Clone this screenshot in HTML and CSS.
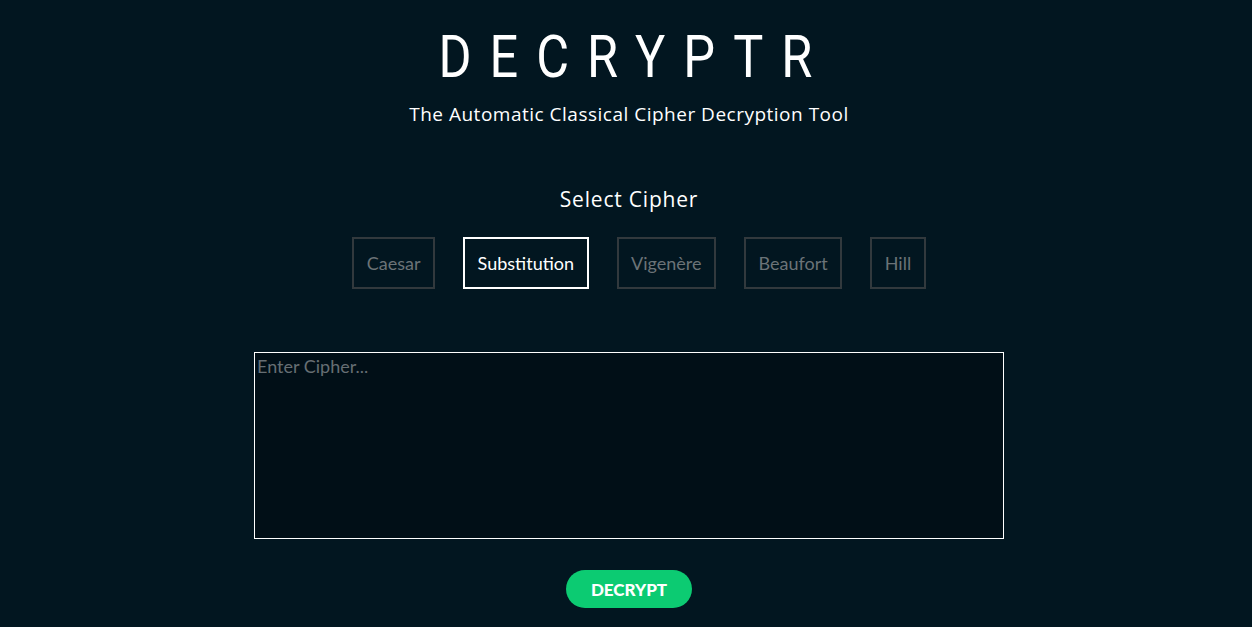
FILE: index.html
```html
<!DOCTYPE html>
<html lang="en">
<head>
<meta charset="utf-8">
<title>Decryptr</title>
<link rel="stylesheet" href="styles.css">
</head>
<body>
<main class="page">
  <h1 class="title">DECRYPTR</h1>
  <p class="subtitle">The Automatic Classical Cipher Decryption Tool</p>
  <h2 class="select-label">Select Cipher</h2>
  <div class="cipher-list">
    <button class="cipher">Caesar</button>
    <button class="cipher active">Substitution</button>
    <button class="cipher">Vigenère</button>
    <button class="cipher">Beaufort</button>
    <button class="cipher">Hill</button>
  </div>
  <textarea class="cipher-input" placeholder="Enter Cipher..."></textarea>
  <button class="decrypt">DECRYPT</button>
</main>
</body>
</html>
```
FILE: styles.css
```css
html, body {
  margin: 0;
  padding: 0;
  background: #021620;
  height: 100%;
}
body {
  color: #ffffff;
  font-family: "Lato", "Open Sans", sans-serif;
}
.page {
  display: flex;
  flex-direction: column;
  align-items: center;
  padding-left: 6px;
}
.title {
  margin: 27px 0 0 0;
  font-family: "Roboto", "Liberation Sans", sans-serif;
  font-weight: 400;
  font-size: 60px;
  line-height: 60px;
  letter-spacing: 21.5px;
  padding-left: 12px;
  color: #ffffff;
  transform: scaleX(0.84);
}
.subtitle {
  margin: 15px 0 0 0;
  font-family: "Open Sans", sans-serif;
  font-size: 19px;
  line-height: 24px;
  letter-spacing: 0.5px;
}
.select-label {
  margin: 60px 0 0 0;
  font-family: "Open Sans", sans-serif;
  font-weight: 400;
  font-size: 21px;
  line-height: 26px;
  letter-spacing: 0.8px;
}
.cipher-list {
  margin-top: 25px;
  margin-left: 20px;
  display: flex;
  gap: 28px;
}
.cipher {
  box-sizing: border-box;
  height: 52px;
  padding: 0 12.5px;
  background: transparent;
  border: 2px solid #32393d;
  color: #6b7377;
  font-family: "Lato", sans-serif;
  font-size: 18px;
  cursor: pointer;
}
.cipher.active {
  border-color: #ffffff;
  color: #ffffff;
}
.cipher-input {
  display: block;
  box-sizing: border-box;
  margin-top: 63px;
  width: 750px;
  height: 187px;
  padding: 3px 2px;
  background: #010f17;
  border: 1px solid #ffffff;
  color: #ffffff;
  font-family: "Lato", sans-serif;
  font-size: 18px;
  line-height: 21px;
  resize: none;
  outline: none;
}
.cipher-input::placeholder {
  color: #666e73;
}
.decrypt {
  margin-top: 31px;
  box-sizing: border-box;
  width: 126px;
  height: 38px;
  border: none;
  border-radius: 19px;
  background: #0ccb72;
  color: #ffffff;
  font-family: "Lato", sans-serif;
  font-weight: 900;
  font-size: 17px;
  cursor: pointer;
}
```
